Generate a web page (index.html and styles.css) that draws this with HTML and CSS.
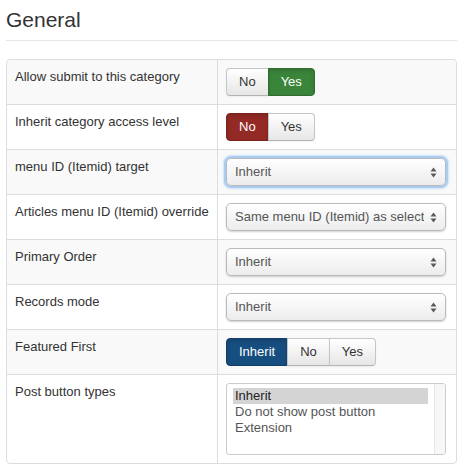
FILE: index.html
```html
<!DOCTYPE html>
<html>
<head>
<meta charset="utf-8">
<link rel="stylesheet" href="styles.css">
</head>
<body>
<div class="page">
  <h2 class="legend">General</h2>
  <table class="opts">
    <tr>
      <td class="lbl">Allow submit to this category</td>
      <td class="ctl">
        <div class="btn-group">
          <span class="btn">No</span><span class="btn success">Yes</span>
        </div>
      </td>
    </tr>
    <tr>
      <td class="lbl">Inherit category access level</td>
      <td class="ctl">
        <div class="btn-group">
          <span class="btn danger">No</span><span class="btn">Yes</span>
        </div>
      </td>
    </tr>
    <tr>
      <td class="lbl">menu ID (Itemid) target</td>
      <td class="ctl">
        <div class="select focus"><span class="sel-text">Inherit</span><svg class="arrows" width="7" height="11" viewBox="0 0 7 11"><path d="M3.5 0.5 L6.5 4.5 L0.5 4.5 Z M3.5 10.5 L6.5 6.5 L0.5 6.5 Z" fill="#5a5a5a"/></svg></div>
      </td>
    </tr>
    <tr>
      <td class="lbl">Articles menu ID (Itemid) override</td>
      <td class="ctl">
        <div class="select"><span class="sel-text">Same menu ID (Itemid) as selected</span><svg class="arrows" width="7" height="11" viewBox="0 0 7 11"><path d="M3.5 0.5 L6.5 4.5 L0.5 4.5 Z M3.5 10.5 L6.5 6.5 L0.5 6.5 Z" fill="#5a5a5a"/></svg></div>
      </td>
    </tr>
    <tr>
      <td class="lbl">Primary Order</td>
      <td class="ctl">
        <div class="select"><span class="sel-text">Inherit</span><svg class="arrows" width="7" height="11" viewBox="0 0 7 11"><path d="M3.5 0.5 L6.5 4.5 L0.5 4.5 Z M3.5 10.5 L6.5 6.5 L0.5 6.5 Z" fill="#5a5a5a"/></svg></div>
      </td>
    </tr>
    <tr>
      <td class="lbl">Records mode</td>
      <td class="ctl">
        <div class="select"><span class="sel-text">Inherit</span><svg class="arrows" width="7" height="11" viewBox="0 0 7 11"><path d="M3.5 0.5 L6.5 4.5 L0.5 4.5 Z M3.5 10.5 L6.5 6.5 L0.5 6.5 Z" fill="#5a5a5a"/></svg></div>
      </td>
    </tr>
    <tr>
      <td class="lbl">Featured First</td>
      <td class="ctl">
        <div class="btn-group">
          <span class="btn primary">Inherit</span><span class="btn">No</span><span class="btn">Yes</span>
        </div>
      </td>
    </tr>
    <tr>
      <td class="lbl">Post button types</td>
      <td class="ctl">
        <div class="listbox">
          <div class="list-items">
            <div class="opt selected">Inherit</div>
            <div class="opt">Do not show post button</div>
            <div class="opt">Extension</div>
          </div>
          <div class="scroll-track"></div>
        </div>
      </td>
    </tr>
  </table>
</div>
</body>
</html>
```
FILE: styles.css
```css
html, body {
  margin: 0;
  padding: 0;
  background: #fff;
}
body {
  font-family: "Liberation Sans", Arial, Helvetica, sans-serif;
  font-size: 13px;
  line-height: 18px;
  color: #333;
}
.page {
  padding: 0 10px 0 6px;
}
.legend {
  margin: 0 0 18px 0;
  font-size: 21px;
  font-weight: normal;
  line-height: 40px;
  height: 40px;
  color: #333;
  border-bottom: 1px solid #e5e5e5;
}
.opts {
  width: 451px;
  border-collapse: separate;
  border-spacing: 0;
  border: 1px solid #ddd;
  border-radius: 4px;
}
.opts td {
  padding: 8px;
  vertical-align: top;
  border-top: 1px solid #ddd;
}
.opts tr:first-child td {
  border-top: 0;
}
.opts tr:nth-child(odd) td {
  background: #f9f9f9;
}
.opts tr:first-child td:first-child { border-top-left-radius: 4px; }
.opts tr:first-child td:last-child { border-top-right-radius: 4px; }
.opts tr:last-child td:first-child { border-bottom-left-radius: 4px; }
.opts tr:last-child td:last-child { border-bottom-right-radius: 4px; }
.lbl {
  width: 194px;
  color: #333;
}
.ctl {
  border-left: 1px solid #ddd;
}
.btn-group {
  display: flex;
}
.btn {
  display: block;
  padding: 4px 12px;
  font-size: 13px;
  line-height: 18px;
  color: #333;
  text-align: center;
  background: linear-gradient(#ffffff, #e6e6e6);
  border: 1px solid #c5c5c5;
  border-bottom-color: #b3b3b3;
  box-shadow: inset 0 1px 0 rgba(255,255,255,.2), 0 1px 2px rgba(0,0,0,.05);
  margin-left: -1px;
}
.btn:first-child {
  margin-left: 0;
  border-radius: 4px 0 0 4px;
}
.btn:last-child {
  border-radius: 0 4px 4px 0;
}
.btn.success {
  background: #3b853b;
  border-color: #2f6d2f;
  color: #fff;
  box-shadow: inset 0 2px 4px rgba(0,0,0,.15);
}
.btn.danger {
  background: #942a25;
  border-color: #7e221e;
  color: #fff;
  box-shadow: inset 0 2px 4px rgba(0,0,0,.15);
}
.btn.primary {
  background: #174e80;
  border-color: #123f69;
  color: #fff;
  box-shadow: inset 0 2px 4px rgba(0,0,0,.15);
}
.select {
  display: flex;
  align-items: center;
  box-sizing: border-box;
  width: 220px;
  height: 28px;
  padding: 0 8px 0 8px;
  border: 1px solid #b9b9b9;
  border-radius: 5px;
  background: linear-gradient(#ffffff, #ececec);
  box-shadow: 0 1px 2px rgba(0,0,0,.18);
  color: #555;
  font-size: 13px;
}
.select.focus {
  box-shadow: 0 0 0 2px #a9cdf2, 0 0 2px 3px #cfe3f8;
}
.sel-text {
  flex: 1;
  min-width: 0;
  overflow: hidden;
  white-space: nowrap;
}
.arrows {
  flex: none;
  margin-left: 6px;
}
.listbox {
  display: flex;
  box-sizing: border-box;
  width: 220px;
  height: 72px;
  border: 1px solid #ccc;
  border-radius: 3px;
  background: #fff;
  overflow: hidden;
}
.list-items {
  flex: 1;
  padding: 4px 6px 0 6px;
}
.opt {
  font-size: 13px;
  line-height: 16px;
  color: #555;
  padding-left: 2px;
}
.opt.selected {
  background: #d4d4d4;
  color: #222;
}
.scroll-track {
  flex: none;
  width: 10px;
  background: #f7f7f7;
  border-left: 1px solid #e6e6e6;
}
```
